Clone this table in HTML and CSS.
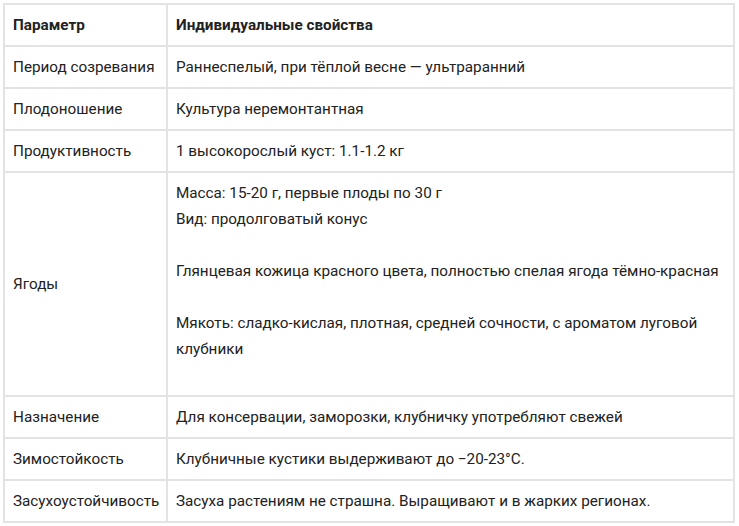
FILE: index.html
```html
<!DOCTYPE html>
<html lang="ru">
<head>
<meta charset="utf-8">
<title>Параметры</title>
<link rel="stylesheet" href="styles.css">
</head>
<body>
<table class="spec">
  <thead>
    <tr><th class="c1">Параметр</th><th>Индивидуальные свойства</th></tr>
  </thead>
  <tbody>
    <tr><td>Период созревания</td><td>Раннеспелый, при тёплой весне — ультраранний</td></tr>
    <tr><td>Плодоношение</td><td>Культура неремонтантная</td></tr>
    <tr><td>Продуктивность</td><td>1 высокорослый куст: 1.1-1.2 кг</td></tr>
    <tr><td>Ягоды</td><td>
      <p>Масса: 15-20 г, первые плоды по 30 г<br>Вид: продолговатый конус</p>
      <p>Глянцевая кожица красного цвета, полностью спелая ягода тёмно-красная</p>
      <p>Мякоть: сладко-кислая, плотная, средней сочности, с ароматом луговой клубники</p>
    </td></tr>
    <tr><td>Назначение</td><td>Для консервации, заморозки, клубничку употребляют свежей</td></tr>
    <tr><td>Зимостойкость</td><td>Клубничные кустики выдерживают до −20-23°С.</td></tr>
    <tr><td>Засухоустойчивость</td><td>Засуха растениям не страшна. Выращивают и в жарких регионах.</td></tr>
  </tbody>
</table>
</body>
</html>
```
FILE: styles.css
```css
html, body {
  margin: 0;
  padding: 0;
  background: #fff;
}
body {
  font-family: Roboto, "Liberation Sans", sans-serif;
  font-size: 15.25px;
  line-height: 26px;
  color: #222;
}
.spec {
  border-collapse: collapse;
  margin: 3px 0 0 3px;
  width: 732px;
  table-layout: fixed;
}
.spec th,
.spec td {
  border: 2px solid #e3e3e3;
  padding: 7px 8px;
  text-align: left;
  vertical-align: middle;
}
.spec th {
  font-weight: 700;
}
.spec .c1 {
  width: 145px;
}
.spec p {
  margin: 0 0 26px;
}
```
